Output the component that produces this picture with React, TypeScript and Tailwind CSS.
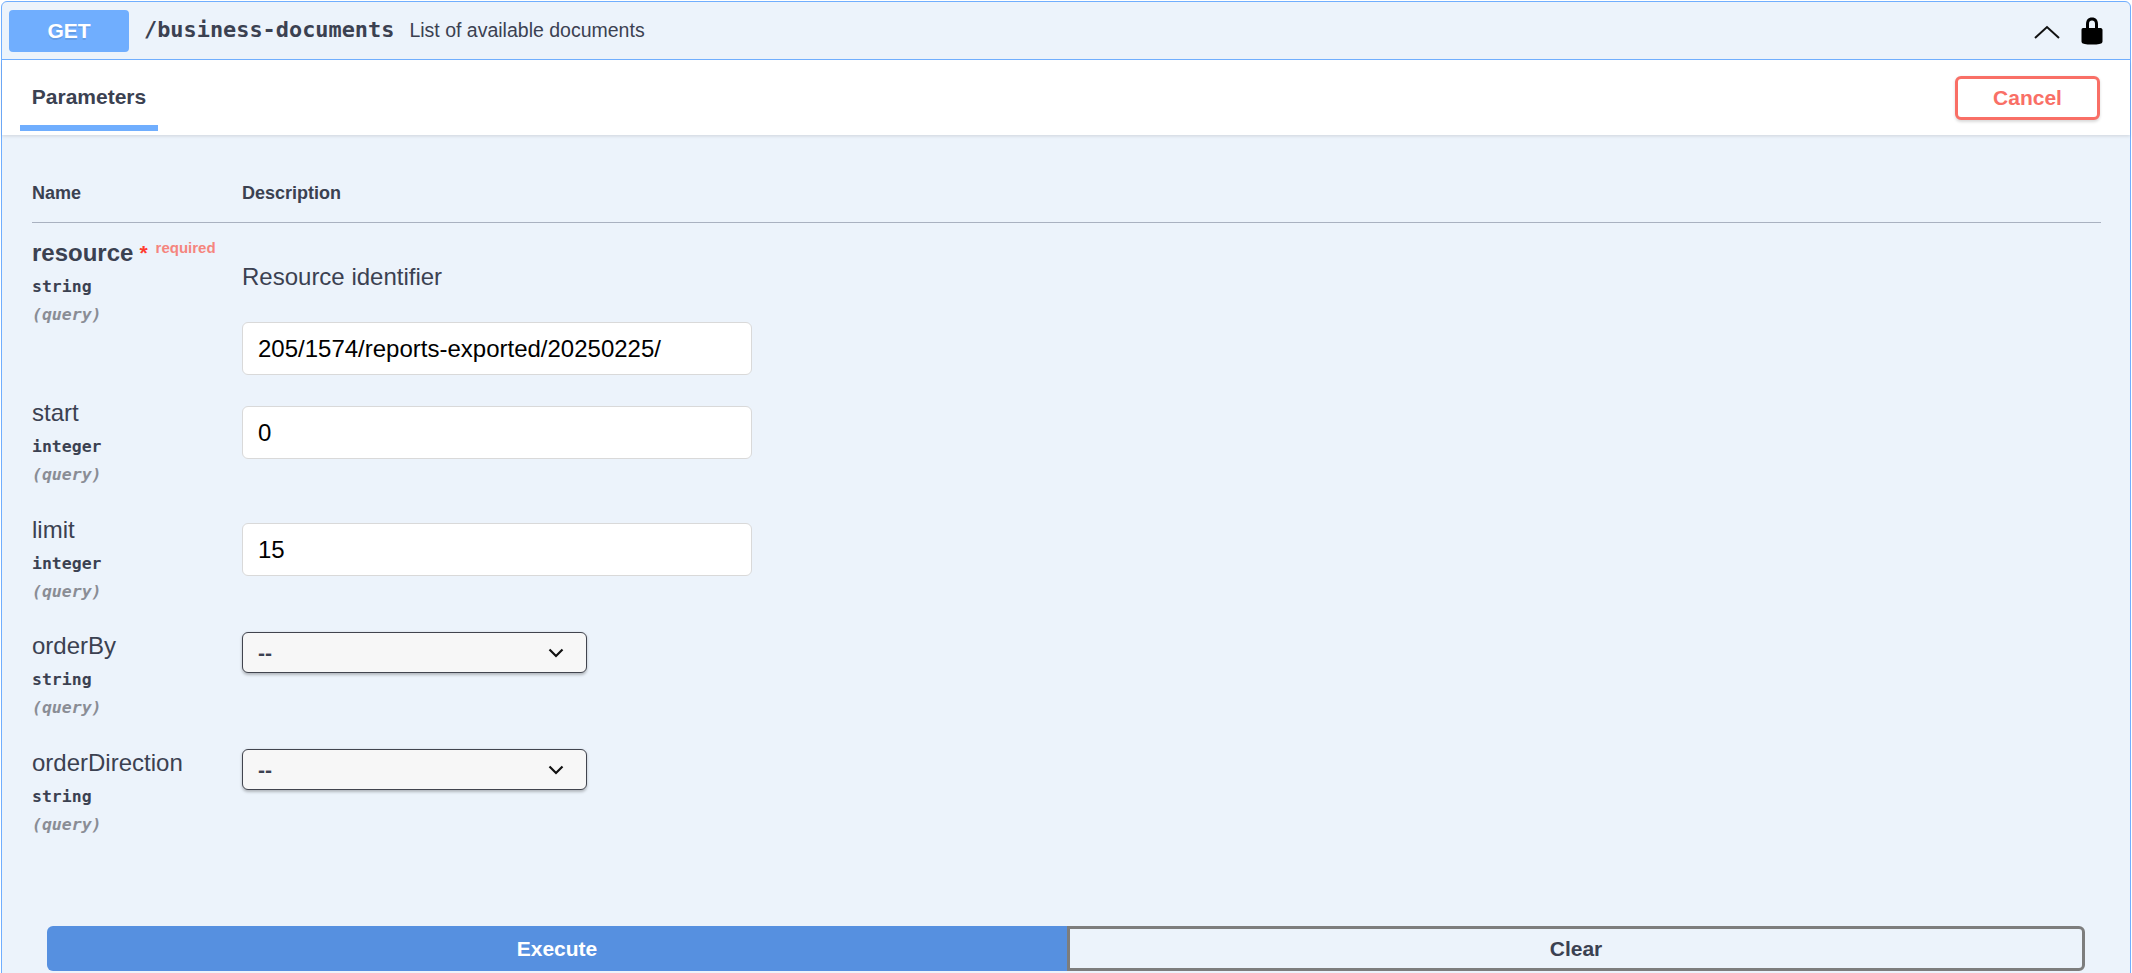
const sans = "font-['Liberation_Sans',Arial,sans-serif]";
const mono = "font-['DejaVu_Sans_Mono',monospace]";

type Param = {
  name: string;
  type: string;
  value?: string;
  required?: boolean;
  description?: string;
};

const params: Param[] = [
  {
    name: "resource",
    type: "string",
    value: "205/1574/reports-exported/20250225/",
    required: true,
    description: "Resource identifier",
  },
  { name: "start", type: "integer", value: "0" },
  { name: "limit", type: "integer", value: "15" },
  { name: "orderBy", type: "string" },
  { name: "orderDirection", type: "string" },
];

function SelectBox() {
  return (
    <div className="relative h-[41px] w-[345px]">
      <select className="h-full w-full appearance-none rounded-[6px] border-[1.5px] border-[#41444e] bg-[#f7f7f7] pl-[15px] text-[21px] font-bold text-[#3b4151] shadow-[0_1.5px_3px_rgba(0,0,0,0.25)]">
        <option>--</option>
      </select>
      <svg
        className="pointer-events-none absolute right-[22px] top-[13px] h-[15px] w-[18px]"
        viewBox="0 0 18 15"
        fill="none"
        stroke="#111"
        strokeWidth="2.2"
      >
        <path d="M2.5 4.5 9 11l6.5-6.5" />
      </svg>
    </div>
  );
}

function ParamRow({ param }: { param: Param }) {
  const isSelect = !param.value;
  return (
    <div className={`flex ${param.required ? "h-[160px]" : "h-[117px]"}`}>
      <div className="w-[210px] shrink-0">
        <div
          className={`flex h-[28px] items-start text-[24px] leading-[28px] text-[#3b4151] ${
            param.required ? "mt-px font-bold" : isSelect ? "" : "mt-px"
          }`}
        >
          {param.name}
          {param.required && (
            <span className="relative ml-[6px] text-[15px] font-bold leading-[28px] text-[#f5857e]">
              <span className="mr-[8px] text-[21px] text-[#ff3b2f]">*</span>
              <span className="relative -top-[7px]">required</span>
            </span>
          )}
        </div>
        <div className={`${mono} mt-[6px] text-[16.5px] font-bold leading-[28px] text-[#3b4151]`}>
          {param.type}
        </div>
        <div className={`${mono} text-[16.5px] font-bold italic leading-[28px] text-[#8a8d95]`}>
          (query)
        </div>
      </div>
      <div>
        {param.description && (
          <p className="mt-[24px] mb-[30px] text-[24px] leading-[30px] text-[#3b4151]">
            {param.description}
          </p>
        )}
        {isSelect ? (
          <SelectBox />
        ) : (
          <input
            defaultValue={param.value}
            className={`block h-[53px] w-[510px] rounded-[6px] border-[1.5px] border-[#d9d9d9] bg-white px-[15px] text-[24px] text-black ${
              param.required ? "" : "mt-2"
            }`}
          />
        )}
      </div>
    </div>
  );
}

export default function App() {
  return (
    <div className={`${sans} h-[973px] overflow-hidden bg-white px-px pt-px`}>
      <div className="h-[1000px] rounded-[6px] border-[1.5px] border-[#70aefe] bg-[#ecf3fb]">
        <div className="flex h-[58px] items-center border-b-[1.5px] border-[#70aefe] pl-[7px] pr-[23px]">
          <div className="flex h-[42px] w-[120px] items-center justify-center rounded-[4px] bg-[#70aefe] text-[21px] font-bold text-white [text-shadow:0_1.5px_0_rgba(0,0,0,0.1)]">
            GET
          </div>
          <span className={`${mono} ml-[15px] text-[21.9px] font-bold text-[#3b4151]`}>
            /business-documents
          </span>
          <span className="ml-[15px] text-[19.5px] text-[#3b4151]">List of available documents</span>
          <div className="ml-auto flex items-center gap-[15px]">
            <svg className="h-[30px] w-[30px]" viewBox="0 0 30 30" fill="none" stroke="#111" strokeWidth="2">
              <path d="M3 22 15 11l12 11" />
            </svg>
            <svg className="h-[30px] w-[30px]" viewBox="0 0 20 20" fill="#000">
              <path d="M15.8 8H14V5.6C14 2.703 12.665 1 10 1 7.334 1 6 2.703 6 5.6V8H4c-.553 0-1 .646-1 1.199V17c0 .549.428 1.139.951 1.307l1.197.387C5.672 18.861 6.55 19 7.1 19h5.8c.549 0 1.428-.139 1.951-.307l1.196-.387c.524-.167.953-.757.953-1.306V9.199C17 8.646 16.352 8 15.8 8zM12 8H8V5.199C8 3.754 8.797 3 10 3c1.203 0 2 .754 2 2.199V8z" />
            </svg>
          </div>
        </div>

        <div className="flex h-[75px] items-center justify-between bg-white pl-[18px] pr-[30px] shadow-[0_1.5px_3px_rgba(0,0,0,0.1)]">
          <div className="flex h-[71px] w-[138px] items-center justify-center self-start border-b-[6px] border-[#70aefe] pt-[9px] text-[21px] font-bold text-[#3b4151]">
            Parameters
          </div>
          <button className="h-[44px] w-[145px] rounded-[6px] border-[3px] border-[#f96f66] bg-white text-[21px] font-bold text-[#f96f66] shadow-[0_1.5px_3px_rgba(0,0,0,0.15)]">
            Cancel
          </button>
        </div>

        <div className="pl-[30px] pr-[29px]">
          <div className="mt-[42px] flex h-[46px] items-start border-b-[1.5px] border-[#a9b1c0] text-[18px] font-bold leading-[32px] text-[#3b4151]">
            <div className="w-[210px]">Name</div>
            <div>Description</div>
          </div>
          <div className="mt-[15px]">
            {params.map((param) => (
              <ParamRow key={param.name} param={param} />
            ))}
          </div>
        </div>

        <div className="mt-[60px] flex h-[45px] pl-[45px] pr-[45px] text-[21px] font-bold">
          <button className="w-[1020px] rounded-l-[6px] bg-[#5690e0] text-white">Execute</button>
          <button className="flex-1 rounded-r-[6px] border-[3px] border-[#7d7d7d] text-[#3b4151]">Clear</button>
        </div>
      </div>
    </div>
  );
}
